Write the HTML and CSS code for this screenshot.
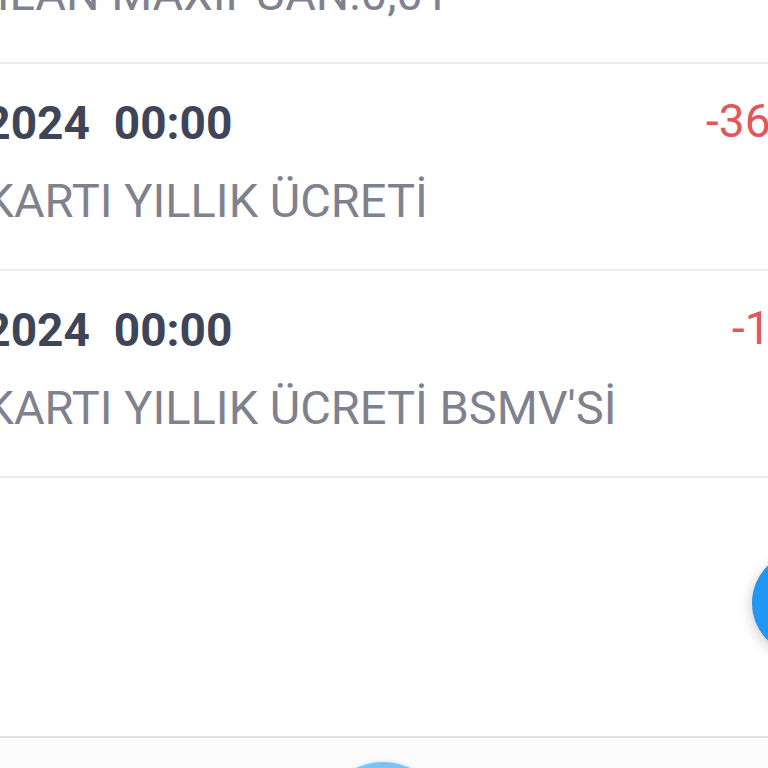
FILE: index.html
```html
<!DOCTYPE html>
<html lang="tr">
<head>
    <meta charset="UTF-8">
    <meta name="viewport" content="width=device-width, initial-scale=1.0">
    <title>Hesap Hareketleri</title>
    <link rel="stylesheet" href="styles.css">
</head>
<body>
    <div class="screen">
        <main class="content">
            <ul class="tx-list">
                <li class="tx">
                    <div class="tx-top">
                        <span class="tx-date">15.01.2024<span class="tx-time">00:00</span></span>
                        <span class="tx-amount tx-amount--plus">0,01 TL</span>
                    </div>
                    <div class="tx-desc">KAZANILAN MAXIPUAN:0,01</div>
                </li>
                <li class="tx">
                    <div class="tx-top">
                        <span class="tx-date">15.01.2024<span class="tx-time">00:00</span></span>
                        <span class="tx-amount">-36,00 TL</span>
                    </div>
                    <div class="tx-desc">KREDİ KARTI YILLIK ÜCRETİ</div>
                </li>
                <li class="tx">
                    <div class="tx-top">
                        <span class="tx-date">15.01.2024<span class="tx-time">00:00</span></span>
                        <span class="tx-amount">-1,80 TL</span>
                    </div>
                    <div class="tx-desc">KREDİ KARTI YILLIK ÜCRETİ BSMV'Sİ</div>
                </li>
            </ul>

            <button class="fab" aria-label="Filtrele">
                <svg width="40" height="40" viewBox="0 0 24 24" fill="none" stroke="#fff" stroke-width="2.4" stroke-linecap="round">
                    <path d="M12 5v14M5 12h14"/>
                </svg>
            </button>
        </main>

        <nav class="bottom-nav">
            <span class="nav-active"></span>
        </nav>
    </div>
</body>
</html>
```

FILE: styles.css
```css
* {
    margin: 0;
    padding: 0;
    box-sizing: border-box;
}

body {
    font-family: Roboto, 'Noto Sans', sans-serif;
    background: #ffffff;
    overflow: hidden;
}

.screen {
    width: 768px;
    height: 768px;
    overflow: hidden;
    display: flex;
    flex-direction: column;
}

.content {
    position: relative;
    height: 736px;
    flex-shrink: 0;
    background: #ffffff;
}

/* list is wider than the viewport, the phone shot is cropped */
.tx-list {
    list-style: none;
    margin-top: -143px;
    margin-left: -184px;
    width: 1114px;
}

.tx {
    padding: 31px 36px 43px;
    border-bottom: 2px solid #ececec;
}

.tx-top {
    display: flex;
    justify-content: space-between;
    align-items: center;
    height: 56px;
}

.tx-date {
    font-size: 46px;
    font-weight: 700;
    line-height: 56px;
    color: #3f4558;
}

.tx-time {
    margin-left: 24px;
}

.tx-amount {
    font-size: 46px;
    line-height: 56px;
    margin-top: -4px;
    color: #e0585c;
}

.tx-amount--plus {
    color: #3aa55d;
}

.tx-desc {
    margin-top: 25px;
    margin-left: -8px;
    font-size: 47px;
    line-height: 50px;
    color: #7f828e;
}

.fab {
    position: absolute;
    left: 752px;
    top: 551px;
    width: 104px;
    height: 104px;
    border: none;
    border-radius: 50%;
    background: #2196f3;
    box-shadow: 0 4px 14px rgba(0, 0, 0, 0.22);
    display: flex;
    align-items: center;
    justify-content: center;
}

.bottom-nav {
    height: 140px;
    flex-shrink: 0;
    border-top: 2px solid #e3e3e3;
    background: #fcfcfc;
    box-shadow: 0 -3px 6px rgba(0, 0, 0, 0.02);
    display: flex;
    justify-content: center;
    padding-top: 24px;
}

.nav-active {
    display: block;
    width: 124px;
    height: 124px;
    margin-left: -2px;
    border-radius: 50%;
    background: #7cc1f7;
    box-shadow: 0 0 4px #b6ddfb;
}
```
